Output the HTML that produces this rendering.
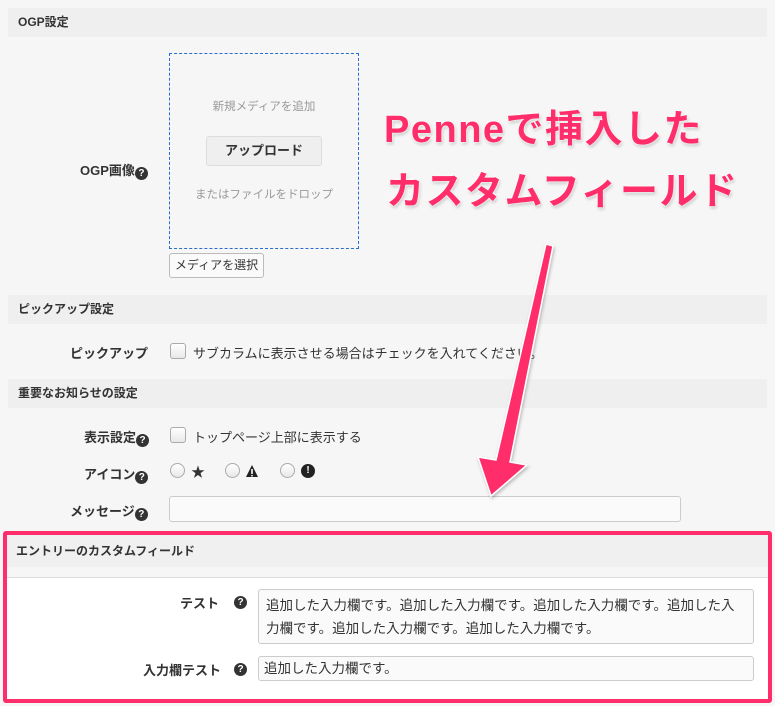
<!DOCTYPE html>
<html><head><meta charset="utf-8"><style>
*{box-sizing:border-box;margin:0;padding:0}
body{width:775px;height:706px;background:#f6f6f6;font-family:"Liberation Sans","Noto Sans CJK JP",sans-serif;font-size:13px;color:#333;position:relative;overflow:hidden}
.a{position:absolute}
.hd{position:absolute;left:8px;width:759px;height:29px;background:#efefef;font-weight:bold;font-size:12px;padding-left:10px;line-height:29px;color:#333}
.lb{position:absolute;font-weight:bold;font-size:13px;text-align:right;white-space:nowrap}
.q{display:inline-block;width:13px;height:13px;border-radius:50%;background:#333;color:#fff;font-size:10px;line-height:13px;text-align:center;font-weight:bold;vertical-align:-1px}
.cb{position:absolute;width:16px;height:16px;border:1px solid #aaa;border-radius:3px;background:linear-gradient(#fff,#e8e8e8)}
.rd{position:absolute;width:15px;height:15px;border:1px solid #aaa;border-radius:50%;background:linear-gradient(#fff,#e8e8e8)}
.big{position:absolute;font-weight:bold;font-size:38px;color:#ff2d6a;white-space:nowrap;text-shadow:0 0 2px #fff,0 0 3px #fff,1px 2px 3px rgba(0,0,0,.25);letter-spacing:1.5px}
</style></head><body>
<div class="hd" style="top:8px">OGP設定</div>
<div class="lb" style="left:80px;top:160px">OGP画像<span class="q">?</span></div>
<div class="a" style="left:169px;top:53px;width:190px;height:196px;border:1px dashed #2a6bd0"></div>
<div class="a" style="left:169px;top:98px;width:190px;text-align:center;font-size:11.5px;color:#999">新規メディアを追加</div>
<div class="a" style="left:206px;top:136px;width:116px;height:30px;border:1px solid #ddd;border-radius:3px;background:#efefef;text-align:center;line-height:28px;font-weight:bold;font-size:13px">アップロード</div>
<div class="a" style="left:169px;top:186px;width:190px;text-align:center;font-size:11.5px;color:#999">またはファイルをドロップ</div>
<div class="a" style="left:169px;top:253px;width:95px;height:25px;border:1px solid #bbb;border-radius:3px;background:#fafafa;text-align:center;line-height:23px;font-size:12px">メディアを選択</div>

<div class="hd" style="top:295px">ピックアップ設定</div>
<div class="lb" style="left:70px;top:343px">ピックアップ</div>
<div class="cb" style="left:170px;top:343px"></div>
<div class="a" style="left:193px;top:343px;font-size:13px">サブカラムに表示させる場合はチェックを入れてください。</div>

<div class="hd" style="top:379px">重要なお知らせの設定</div>
<div class="lb" style="left:84px;top:427px">表示設定<span class="q">?</span></div>
<div class="cb" style="left:170px;top:427px"></div>
<div class="a" style="left:193px;top:427px">トップページ上部に表示する</div>
<div class="lb" style="left:84px;top:464px">アイコン<span class="q">?</span></div>
<div class="rd" style="left:170px;top:463px"></div><div class="a" style="left:191px;top:462px;font-size:14px">★</div>
<div class="rd" style="left:225px;top:463px"></div>
<svg class="a" style="left:245px;top:464px" width="14" height="14"><polygon points="7,1 13,13 1,13" fill="#222"/><rect x="6.2" y="5" width="1.6" height="5" fill="#fff"/><rect x="6.2" y="11" width="1.6" height="1.4" fill="#fff"/></svg>
<div class="rd" style="left:280px;top:463px"></div><div class="a" style="left:301px;top:464px;width:14px;height:14px;border-radius:50%;background:#222;color:#fff;font-size:10px;font-weight:bold;text-align:center;line-height:14px">!</div>
<div class="lb" style="left:70px;top:501px">メッセージ<span class="q">?</span></div>
<div class="a" style="left:169px;top:496px;width:512px;height:26px;border:1px solid #ccc;border-radius:3px;background:#fafafa"></div>

<div class="a" style="left:3px;top:531px;width:769px;height:172px;border:4px solid #ff2d6a;border-radius:3px;background:#fff">
 <div class="a" style="left:0;top:0;width:761px;height:32px;background:#f0f0f0;font-weight:bold;font-size:12px;padding-left:9px;line-height:32px">エントリーのカスタムフィールド</div>
 <div class="a" style="left:0;top:32px;width:761px;height:11px;background:#f6f6f6;border-bottom:1px solid #ddd"></div>
</div>
<div class="lb" style="left:180px;top:593px">テスト</div>
<span class="q a" style="left:234px;top:596px">?</span>
<div class="a" style="left:258px;top:589px;width:496px;height:55px;border:1px solid #ccc;border-radius:3px;background:#fafafa;padding:4px 7px;font-size:13.5px;line-height:23px">追加した入力欄です。追加した入力欄です。追加した入力欄です。追加した入力欄です。追加した入力欄です。追加した入力欄です。</div>
<div class="lb" style="left:143px;top:660px">入力欄テスト</div>
<span class="q a" style="left:234px;top:663px">?</span>
<div class="a" style="left:258px;top:656px;width:496px;height:25px;border:1px solid #ccc;border-radius:3px;background:#fafafa;padding:0 5px;line-height:23px;font-size:13.5px">追加した入力欄です。</div>

<div class="big" style="left:384px;top:98px">Penneで挿入した</div>
<div class="big" style="left:386px;top:160px">カスタムフィールド</div>
<svg class="a" style="left:0;top:0" width="775" height="706">
<defs><filter id="s"><feDropShadow dx="1" dy="2" stdDeviation="1.5" flood-opacity=".25"/></filter></defs>
<g filter="url(#s)" fill="#ff2d6a" stroke="#fff" stroke-width="1.5">
<polygon points="546,244 553,246 510,462 527,465 491,496 478,457 496,460"/>
</g>
</svg>
</body></html>
